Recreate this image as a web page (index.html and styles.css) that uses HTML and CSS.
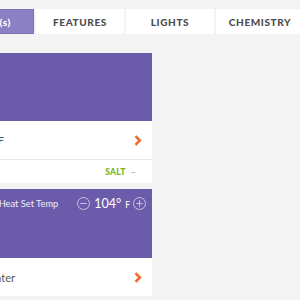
FILE: index.html
```html
<!DOCTYPE html>
<html>
<head>
<meta charset="utf-8">
<link rel="stylesheet" href="styles.css">
</head>
<body>
<nav class="tabs">
  <div class="tab active">PUMP(s)</div>
  <div class="tab">FEATURES</div>
  <div class="tab">LIGHTS</div>
  <div class="tab">CHEMISTRY</div>
</nav>
<main class="content">
  <section class="card">
    <div class="card-head"></div>
    <div class="row">
      <span class="label label-temp">Pool 82° F</span>
      <svg class="chev" width="8" height="11" viewBox="0 0 8 11"><path d="M1.5 1.2 L5.8 5.5 L1.5 9.8" fill="none" stroke="#f26b2c" stroke-width="2.6"/></svg>
    </div>
    <div class="row row-sub">
      <span class="salt">SALT</span><span class="dash">–</span>
    </div>
  </section>
  <section class="card">
    <div class="card-head head-temp">
      <span class="set-label">Heat Set Temp</span>
      <svg class="circ" width="13" height="13" viewBox="0 0 13 13"><circle cx="6.5" cy="6.5" r="6" fill="none" stroke="#c9c2e6" stroke-width="1"/><path d="M3.2 6.5h6.6" stroke="#c9c2e6" stroke-width="1"/></svg>
      <span class="temp">104°<small>F</small></span>
      <svg class="circ" width="13" height="13" viewBox="0 0 13 13"><circle cx="6.5" cy="6.5" r="6" fill="none" stroke="#c9c2e6" stroke-width="1"/><path d="M3.2 6.5h6.6M6.5 3.2v6.6" stroke="#c9c2e6" stroke-width="1"/></svg>
    </div>
    <div class="row row-last">
      <span class="label label-heater">Heater</span>
      <svg class="chev" width="8" height="11" viewBox="0 0 8 11"><path d="M1.5 1.2 L5.8 5.5 L1.5 9.8" fill="none" stroke="#f26b2c" stroke-width="2.6"/></svg>
    </div>
  </section>
</main>
</body>
</html>
```
FILE: styles.css
```css
html, body {
  margin: 0;
  padding: 0;
  background: #f3f3f3;
  font-family: Lato, "Open Sans", sans-serif;
  overflow: hidden;
}
.tabs {
  display: flex;
  gap: 2px;
  margin-left: -54px;
  padding-top: 9px;
}
.tab {
  flex: 0 0 88px;
  height: 25px;
  box-sizing: border-box;
  background: #fff;
  color: #4d4d4d;
  font-weight: 900;
  font-size: 10px;
  letter-spacing: 0.6px;
  display: flex;
  align-items: center;
  justify-content: center;
}
.tab.active {
  background: #8b80c3;
  border: 1px solid #7d70bb;
  color: #fff;
  justify-content: flex-end;
  padding-right: 22px;
}
.content {
  margin-top: 19px;
  margin-left: -148px;
  width: 300px;
  display: flex;
  flex-direction: column;
  gap: 6px;
}
.card {
  background: #fff;
}
.card-head {
  height: 68px;
  background: #6b5bab;
}
.head-temp {
  height: 69px;
  display: flex;
  align-items: flex-start;
  justify-content: flex-end;
  gap: 4px;
  padding: 8px 6px 0 0;
  box-sizing: border-box;
  color: #fff;
}
.set-label {
  font-size: 9.3px;
  line-height: 13px;
  margin-right: 15px;
  white-space: nowrap;
  color: #f0eef8;
}
.circ {
  flex: 0 0 auto;
}
.temp {
  flex: none;
  display: flex;
  align-items: baseline;
  font-size: 12.5px;
  line-height: 13px;
  margin-right: -1px;
  white-space: nowrap;
}
.temp small {
  font-size: 8.5px;
  margin-left: 4px;
}
.row {
  height: 39px;
  display: flex;
  align-items: center;
  justify-content: space-between;
  padding: 0 10px 0 0;
  border-bottom: 1px solid #e7e7e7;
  box-sizing: border-box;
}
.label {
  font-size: 11px;
  color: #555;
  display: inline-block;
  text-align: right;
  white-space: nowrap;
}
.label-temp { width: 152px; }
.label-heater { width: 163px; }
.row-sub {
  height: 23px;
  border-bottom: 0;
  justify-content: flex-end;
  padding-right: 16px;
  gap: 5px;
}
.salt {
  color: #78b41e;
  font-weight: 900;
  font-size: 8.5px;
  letter-spacing: 0.3px;
}
.dash {
  color: #999;
  font-size: 9px;
}
.row-last {
  height: 38px;
  border-bottom: 0;
}
```
